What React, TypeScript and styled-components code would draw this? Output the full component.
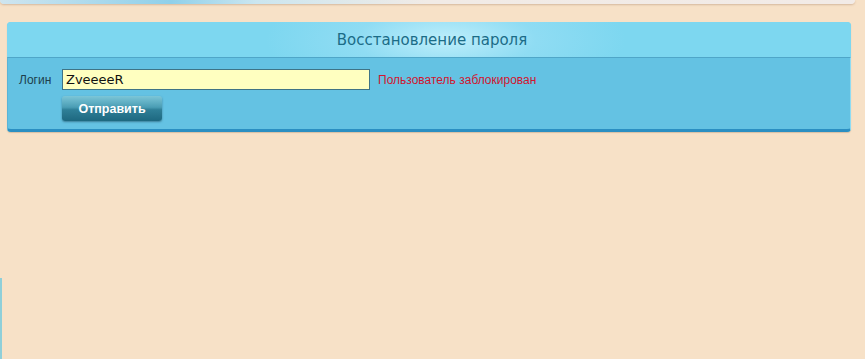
import React, { useState } from 'react';
import styled, { createGlobalStyle } from 'styled-components';

const Global = createGlobalStyle`
  html, body {
    margin: 0;
    padding: 0;
    background: #f7e1c7;
    font-family: "Liberation Sans", Arial, sans-serif;
  }
`;

const Page = styled.div`
  width: 865px;
  height: 359px;
  position: relative;
  overflow: hidden;
  background: #f7e1c7;
`;

const TopStrip = styled.div`
  margin: 0 10px 0 0;
  height: 4px;
  border-radius: 0 0 4px 4px;
  background: linear-gradient(90deg, #cfe5ef 0%, #8fd0ea 20%, #cbe6f0 30%, #f1ebe6 50%, #f2ebe7 100%);
  box-shadow: 0 1px 2px rgba(150, 110, 80, 0.35);
`;

const Panel = styled.div`
  margin: 18px 14px 0 7px;
  border-radius: 4px;
  background: #7dd7f0;
  box-shadow: 0 1px 1px rgba(120, 90, 60, 0.25);
`;

const PanelHeader = styled.div`
  height: 35px;
  display: flex;
  align-items: center;
  justify-content: center;
  border-radius: 4px 4px 0 0;
  background: radial-gradient(ellipse 180px 60px at 52% 50%, #bdeefb 0%, #8fdcf3 50%, rgba(125, 215, 240, 0) 100%), #7dd7f0;
  color: #1b6c87;
  font-family: "DejaVu Sans", Verdana, sans-serif;
  font-size: 15px;
  padding: 1px 0 0 6px;
  box-sizing: border-box;
`;

const PanelBody = styled.div`
  background: #64c2e3;
  border-top: 1px solid #4fa6c8;
  border-left: 1px solid #5bb4d6;
  border-right: 1px solid #8fdcf3;
  border-bottom: 3px solid #2b8fc2;
  border-radius: 0 0 4px 4px;
  padding: 11px 0 8px 11px;
  display: grid;
  grid-template-columns: 43px auto;
  row-gap: 6px;
  align-items: center;
`;

const Label = styled.label`
  font-size: 12px;
  color: #1d3e4c;
  font-family: "Liberation Sans", Arial, sans-serif;
`;

const FieldRow = styled.div`
  display: flex;
  align-items: center;
  gap: 8px;
`;

const Input = styled.input`
  width: 308px;
  height: 21px;
  box-sizing: border-box;
  border: 1px solid #3f7486;
  background: #ffffc0;
  font-family: "DejaVu Sans", Verdana, sans-serif;
  font-size: 13px;
  color: #111;
  padding: 0 3px;
  outline: none;
`;

const ErrorText = styled.span`
  color: #d11630;
  font-family: "Liberation Sans", Arial, sans-serif;
  font-size: 12px;
`;

const SubmitButton = styled.button`
  grid-column: 2;
  width: 100px;
  height: 25px;
  border: none;
  border-radius: 3px;
  background: linear-gradient(180deg, #7cc6d8 0%, #4a9db4 45%, #2f7f97 55%, #1d6880 100%);
  color: #fff;
  font-family: "Liberation Sans", Arial, sans-serif;
  font-weight: bold;
  font-size: 12.5px;
  box-shadow: 0 1px 2px rgba(20, 60, 80, 0.5);
  cursor: pointer;
  padding: 0;
`;

const LeftLine = styled.div`
  position: absolute;
  left: 0;
  top: 278px;
  width: 2px;
  bottom: 0;
  background: #8fcfd9;
`;

export default function App() {
  const [login, setLogin] = useState('ZveeeeR');
  return (
    <Page>
      <Global />
      <TopStrip />
      <Panel>
        <PanelHeader>Восстановление пароля</PanelHeader>
        <PanelBody>
          <Label htmlFor="login">Логин</Label>
          <FieldRow>
            <Input id="login" value={login} onChange={e => setLogin(e.target.value)} />
            <ErrorText>Пользователь заблокирован</ErrorText>
          </FieldRow>
          <SubmitButton>Отправить</SubmitButton>
        </PanelBody>
      </Panel>
      <LeftLine />
    </Page>
  );
}
